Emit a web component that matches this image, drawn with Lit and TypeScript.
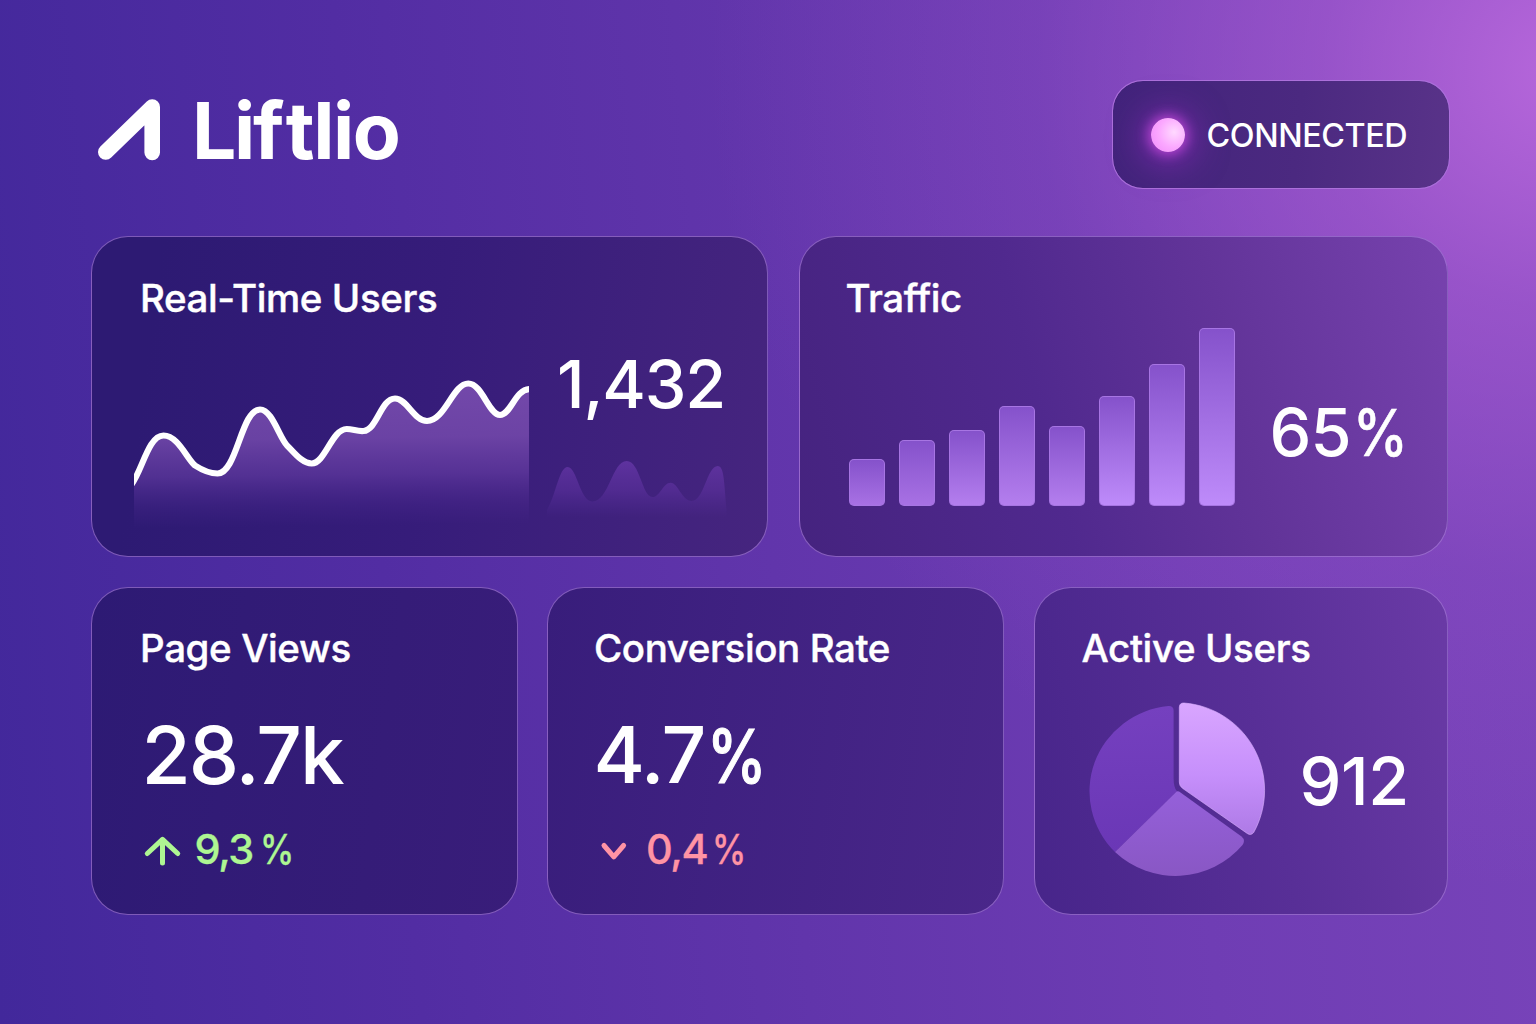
import { LitElement, html, svg, css } from "lit";
import { customElement, property } from "lit/decorators.js";

@customElement("brand-logo")
class BrandLogo extends LitElement {
  static styles = css`
    :host { display: flex; align-items: flex-start; }
    .mark { display: block; width: 66px; height: 66px; margin-top: 17px; }
    .name {
      margin: 1px 0 0 30px; font-size: 78.5px; line-height: 100px; font-weight: 690;
      letter-spacing: -1.5px; color: #fff; white-space: nowrap;
    }
    .tight { letter-spacing: -2.4px; }
    .loose { letter-spacing: 1.6px; }
  `;
  render() {
    return html`
      <svg class="mark" viewBox="96 97 66 66">
        <path d="M152.2 152.5V107L105.8 152" fill="none" stroke="#fff" stroke-width="15.6"
          stroke-linecap="round" stroke-linejoin="round" />
      </svg>
      <span class="name"><span class="tight">Li</span><span class="loose">f</span>tlio</span>
    `;
  }
}

@customElement("status-pill")
class StatusPill extends LitElement {
  static styles = css`
    :host {
      display: flex; align-items: center; box-sizing: border-box;
      width: 338px; height: 109px; padding-left: 38px;
      border: 1.5px solid rgba(180, 120, 225, 0.75); border-radius: 31px;
      background: linear-gradient(95deg, #42237b, #4b2980 55%, #593389) padding-box, #9458c8;
    }
    .dot {
      width: 34px; height: 34px; border-radius: 50%;
      background: radial-gradient(circle at 68% 42%, #ffd9ff, #fba8ff 50%, #f188fb);
      box-shadow: 0 0 12px 3px rgba(206, 76, 226, 0.75), 0 3px 32px 11px rgba(150, 46, 196, 0.55);
    }
    .label {
      margin: 2px 0 0 21.5px; font-size: 32.3px; line-height: 40px; font-weight: 500;
      letter-spacing: -0.4px; color: #fff; white-space: nowrap;
    }
  `;
  render() {
    return html`<span class="dot"></span><span class="label">CONNECTED</span>`;
  }
}

@customElement("metric-card")
class MetricCard extends LitElement {
  @property() heading = "";
  static styles = css`
    :host {
      display: flex; flex-direction: column; box-sizing: border-box; min-width: 0;
      padding: 41px 0 0 47px;
      border: 1.5px solid rgba(176, 130, 226, 0.62); border-radius: 37px;
    }
    .heading {
      margin: 0; font-size: 38.5px; line-height: 40px; font-weight: 550;
      letter-spacing: -0.4px; color: #fff; white-space: nowrap;
      -webkit-text-stroke: 0.4px #fff;
    }
  `;
  render() {
    return html`<h2 class="heading">${this.heading}</h2><slot></slot>`;
  }
}

const LINE =
  "M131 485C142 472 148 435.500 163.500 435.500C178 435.500 187 459 195 465.500C202 470 210 473.500 217.500 473.500" +
  "C237 473.500 241 409.500 260 409.500C272 409.500 279 437 287 445.500C294 452 302 463.500 311.700 463.500" +
  "C325 463.500 332 429 346.700 429C353 429 357 431.500 363.500 431C377 430 381 398.500 395 398.500" +
  "C407 398.500 414 421 427 421C445 421 453 383.500 468.300 383.500C482 383.500 489 415 500 415C511 415 515 389 530 389";

const MINI =
  "M547 510C556 495 559 467 567.700 467C577 467 580 501.500 592.300 501.500C609 501.500 612 461 626.700 461" +
  "C640 461 642 497 652.500 497C660 497 663 482.700 670.700 482.700C678 482.700 682 501 691.700 501" +
  "C704 501 707 466 717.700 466C724 466 724 480 726.500 510V520H547Z";

@customElement("users-chart")
class UsersChart extends LitElement {
  static styles = css`
    :host { display: block; width: 395px; height: 160px; }
    .plot { display: block; width: 395px; height: 160px; }
  `;
  render() {
    return html`
      <svg class="plot" viewBox="134 370 395 160">
        <defs>
          <linearGradient id="area" gradientUnits="userSpaceOnUse" x1="325" y1="380" x2="327" y2="526">
            <stop offset="0" stop-color="#8e5cc0" stop-opacity=".7" />
            <stop offset=".4" stop-color="#8656ba" stop-opacity=".66" />
            <stop offset=".65" stop-color="#7446b0" stop-opacity=".5" />
            <stop offset=".86" stop-color="#6236a4" stop-opacity=".18" />
            <stop offset="1" stop-color="#5a30a0" stop-opacity="0" />
          </linearGradient>
        </defs>
        <path d="${LINE}V530H131Z" fill="url(#area)" />
        <path d=${LINE} fill="none" stroke="#fff" stroke-width="6.200" />
      </svg>
    `;
  }
}

@customElement("mini-chart")
class MiniChart extends LitElement {
  static styles = css`
    :host { display: block; }
    .plot { display: block; width: 184px; height: 65px; }
  `;
  render() {
    return html`
      <svg class="plot" viewBox="545 455 184 65">
        <defs>
          <linearGradient id="fade" x1="0" y1="0" x2="0" y2="1">
            <stop offset="0" stop-color="#6c3aae" stop-opacity=".7" />
            <stop offset=".5" stop-color="#6234a4" stop-opacity=".5" />
            <stop offset=".95" stop-color="#5a30a0" stop-opacity="0" />
          </linearGradient>
        </defs>
        <path d=${MINI} fill="url(#fade)" />
      </svg>
    `;
  }
}

@customElement("bar-chart")
class BarChart extends LitElement {
  @property({ attribute: false }) values: number[] = [];
  static styles = css`
    :host { display: flex; align-items: flex-end; gap: 14px; height: 179px; }
    .bar {
      box-sizing: border-box; width: 36px; border-radius: 5px;
      border: 1px solid rgba(196, 145, 250, 0.5);
      background: linear-gradient(180deg, #8552cb, var(--foot)) padding-box, #8a58cc;
    }
    .low { --foot: #a871e4; }
    .mid { --foot: #b47eee; }
    .high { --foot: #be8bfa; }
  `;
  render() {
    return this.values.map((v, i) => {
      const tone = i < 2 ? "low" : i < 5 ? "mid" : "high";
      return html`<span class="bar ${tone}" style="height:${v}px"></span>`;
    });
  }
}

@customElement("share-pie")
class SharePie extends LitElement {
  static styles = css`
    :host { display: block; }
    .plot { display: block; width: 182px; height: 180px; }
  `;
  render() {
    return html`
      <svg class="plot" viewBox="1086 700 182 180">
        <defs>
          <linearGradient id="a" x1="0" y1="0" x2="0" y2="1">
            <stop offset="0" stop-color="#d9a6ff" />
            <stop offset=".55" stop-color="#c68ffb" />
            <stop offset="1" stop-color="#ae7ae6" />
          </linearGradient>
          <linearGradient id="b" x1="0" y1="0" x2="0" y2="1">
            <stop offset="0" stop-color="#9560da" />
            <stop offset="1" stop-color="#8957c4" />
          </linearGradient>
          <linearGradient id="c" x1="0" y1="0" x2="0" y2="1">
            <stop offset="0" stop-color="#7540bf" />
            <stop offset="1" stop-color="#6a37b6" />
          </linearGradient>
        </defs>
        <path d="M1167.500 706Q1172.600 705.800 1172.600 710.500V778Q1172.600 788 1176 791.300L1114 852A87.300 85.800 0 0 1 1167.500 706Z" fill="url(#c)" />
        <path d="M1175.600 791.500Q1177.500 791 1179.500 792.400L1240.500 836.500Q1244.800 840 1241.500 845A87.300 85.800 0 0 1 1114 852Z" fill="url(#b)" />
        <path d="M1178.300 707.500Q1178.300 702.800 1183 703A87.500 87.500 0 0 1 1252.800 832.300Q1250 836 1246.300 833.500L1181.500 788.300Q1178.300 786 1178.300 782Z" fill="url(#a)" stroke="#dcb0ff" stroke-opacity=".6" stroke-width="1" />
      </svg>
    `;
  }
}

const arrowUp = svg`<path d="M162.500 863V839.500M147.300 853.500L162.500 839.300L177.700 853.500" />`;
const chevronDown = svg`<path d="M604 845.500L613.800 856.800L623.600 845.500" />`;

@customElement("app-root")
class AppRoot extends LitElement {
  static styles = css`
    :host { display: block; }
    .page {
      box-sizing: border-box; width: 1536px; height: 1024px; overflow: hidden;
      padding: 80px 86px 0 91px; display: flex; flex-direction: column;
      font-family: Inter, "Liberation Sans", sans-serif; color: #fff;
      background:
        radial-gradient(ellipse 860px 820px at 1570px 70px, rgba(188, 106, 222, 0.92), rgba(172, 94, 212, 0.62) 29%, rgba(155, 84, 204, 0.26) 62%, rgba(140, 76, 196, 0) 100%),
        linear-gradient(85deg, #42289b 0%, #522da3 26%, #6135ab 50%, #6f3db4 75%, #7944ba 100%);
    }
    .top { display: flex; justify-content: space-between; align-items: flex-start; height: 156px; }
    .brand { margin-left: 5px; }
    .row { display: grid; margin-right: 2px; }
    .first { grid-template-columns: 677px 648.500px; column-gap: 31px; height: 320.500px; }
    .second { grid-template-columns: 426.500px 457px 414px; column-gap: 29.500px; height: 328px; margin-top: 30px; }
    .realtime { padding-left: 48px; background: linear-gradient(98deg, #2d1a73 10%, #361c7a 50%, #46257f 100%); }
    .traffic { padding-left: 45.500px; background: linear-gradient(76deg, #45237f 0%, #50298e 38%, #623499 66%, #7742ae 100%); }
    .views { padding: 40px 0 0 48px; background: linear-gradient(98deg, #2d1a74, #391d7a); }
    .conversion { padding: 40px 0 0 46px; background: linear-gradient(98deg, #381d7b, #4a278a); }
    .active { padding: 40px 0 0 47px; background: linear-gradient(78deg, #47258a, #582f97 55%, #6a3aa6); }

    .split { display: flex; align-items: flex-start; }
    .trend { margin: 51.500px 0 0 -6px; }
    .side { margin: 32.500px 0 0 16px; }
    .figure { display: flex; align-items: flex-start; font-weight: 510; white-space: nowrap; }
    .medium { height: 66px; font-size: 66.500px; line-height: 66px; }
    .users { margin-left: 12px; letter-spacing: -1.2px; }
    .mini { margin-top: 38.500px; }
    .bars { margin: 9px 0 0 3px; }
    .share { margin: 81px 0 0 35px; letter-spacing: -0.8px; }
    .pct { margin-left: 2px; transform: scale(0.83, 0.98); transform-origin: 0 86%; -webkit-text-stroke: 0.6px #fff; }
    .big { height: 80px; margin-top: 47px; font-size: 80px; line-height: 80px; letter-spacing: -2px; }
    .kilo { margin-left: 1.500px; }
    .rate { margin-left: -0.500px; font-size: 78.500px; letter-spacing: -1.6px; }
    .thin { margin-left: 2.500px; transform: scale(0.765, 0.94); -webkit-text-stroke: 1.2px #fff; }
    .delta { display: flex; align-items: flex-start; height: 44px; margin-top: 32.500px; font-size: 41.500px; line-height: 44px; font-weight: 510; white-space: nowrap; -webkit-text-stroke: 0.3px currentColor; }
    .up { margin-left: 3px; color: #aef692; }
    .down { color: #ff93a4; }
    .icon { display: block; width: 40px; height: 36px; margin-top: 5.500px; fill: none; stroke: currentColor; stroke-width: 5; stroke-linecap: round; stroke-linejoin: round; }
    .change { margin-left: 11.500px; letter-spacing: -1.4px; }
    .sign { margin-left: 7px; transform: scale(0.83, 1); transform-origin: 0 86%; }
    .down .sign { margin-left: 5px; }
    .down .icon { margin-left: 0.500px; }
    .pie { margin: 32px 0 0 5px; }
    .count { margin: 80.500px 0 0 31px; letter-spacing: -0.4px; }
  `;
  render() {
    return html`
      <main class="page">
        <header class="top">
          <brand-logo class="brand"></brand-logo>
          <status-pill></status-pill>
        </header>
        <section class="row first">
          <metric-card class="realtime" heading="Real-Time Users">
            <div class="split">
              <users-chart class="trend"></users-chart>
              <div class="side">
                <div class="figure medium users">1,432</div>
                <mini-chart class="mini"></mini-chart>
              </div>
            </div>
          </metric-card>
          <metric-card class="traffic" heading="Traffic">
            <div class="split">
              <bar-chart class="bars" .values=${[47, 66, 76, 100, 80, 110, 142, 178.5]}></bar-chart>
              <div class="figure medium share"><span>65</span><span class="pct">%</span></div>
            </div>
          </metric-card>
        </section>
        <section class="row second">
          <metric-card class="views" heading="Page Views">
            <div class="figure big kilo">28.7k</div>
            <div class="delta up">
              <svg class="icon" viewBox="143 833 40 36">${arrowUp}</svg>
              <span class="change">9,3</span><span class="sign">%</span>
            </div>
          </metric-card>
          <metric-card class="conversion" heading="Conversion Rate">
            <div class="figure big rate"><span>4.7</span><span class="pct thin">%</span></div>
            <div class="delta down">
              <svg class="icon" viewBox="595 833 40 36">${chevronDown}</svg>
              <span class="change">0,4</span><span class="sign">%</span>
            </div>
          </metric-card>
          <metric-card class="active" heading="Active Users">
            <div class="split">
              <share-pie class="pie"></share-pie>
              <div class="figure medium count">912</div>
            </div>
          </metric-card>
        </section>
      </main>
    `;
  }
}
